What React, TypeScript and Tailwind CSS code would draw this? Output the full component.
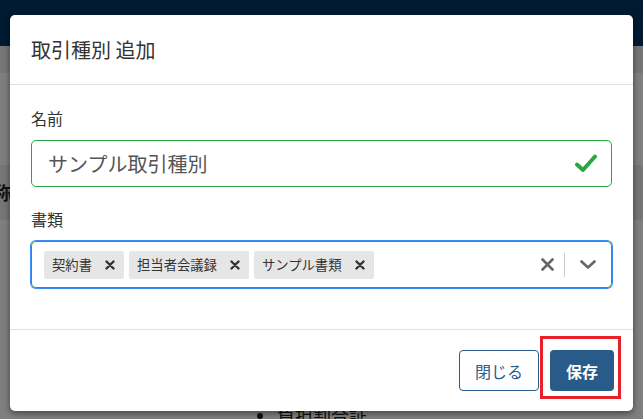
export default function App() {
  return (
    <div className="relative h-[419px] w-full overflow-hidden bg-white font-['Noto_Sans_CJK_JP','Noto_Sans',sans-serif]">
      {/* page behind the modal */}
      <div className="h-[46px] bg-[#023466]" />
      <div className="h-[27px] bg-[#ececec]" />
      <div className="h-[92px] bg-white" />
      <div className="flex h-[55px] items-center bg-[#ececec]">
        <span className="ml-[-6px] text-[18px] font-bold text-[#222]">称</span>
      </div>
      <ul className="pl-[257px] pt-[182px] text-[18px] text-[#222]">
        <li className="flex items-center gap-[14px]">
          <span className="h-[6px] w-[6px] rounded-full bg-[#222]" />
          負担割合証
        </li>
      </ul>

      {/* backdrop + modal */}
      <div className="absolute inset-0 bg-black/50 px-[10px] pt-[15px]">
        <div className="flex h-[396px] w-[623px] flex-col rounded-[5px] bg-white shadow-[0_2px_6px_rgba(0,0,0,0.5)]">
          <div className="flex h-[70px] items-center border-b border-[#e0e0e0] px-[21px]">
            <h5 className="text-[20px] text-[#333]">取引種別 追加</h5>
          </div>

          <div className="flex-1 px-[21px] pt-[21px]">
            <div className="mb-[20px]">
              <label className="mb-[10px] block text-[16px] leading-6 text-[#333]">名前</label>
              <div className="flex h-[47px] items-center justify-between rounded-[5px] border border-[#28a745] pl-[16px] pr-[14px]">
                <span className="text-[20px] text-[#555]">サンプル取引種別</span>
                <svg width="22" height="19" viewBox="0 0 22 19" fill="none">
                  <path d="M2 10.5 L8 16 L20 2.5" stroke="#28a745" strokeWidth="4" strokeLinecap="round" strokeLinejoin="round" />
                </svg>
              </div>
            </div>

            <div>
              <label className="mb-[10px] block text-[16px] leading-6 text-[#333]">書類</label>
              <div className="flex h-[47px] items-center rounded-[5px] border border-[#28a745] pl-[12px] shadow-[0_0_0_1px_#3b8cf0]">
                <div className="flex flex-1 items-center gap-[5px]">
                  {["契約書", "担当者会議録", "サンプル書類"].map((t) => (
                    <div key={t} className="flex h-[28px] items-center gap-[13px] rounded-[2px] bg-[#e6e6e6] pl-[8px] pr-[9px]">
                      <span className="text-[13.33px] text-[#333]">{t}</span>
                      <svg width="10" height="10" viewBox="0 0 10 10">
                        <path d="M1.5 1.5 L8.5 8.5 M8.5 1.5 L1.5 8.5" stroke="#333" strokeWidth="2.4" strokeLinecap="round" />
                      </svg>
                    </div>
                  ))}
                </div>
                <div className="flex items-center">
                  <div className="px-[10px]">
                    <svg width="13" height="13" viewBox="0 0 13 13">
                      <path d="M1.5 1.5 L11.5 11.5 M11.5 1.5 L1.5 11.5" stroke="#666" strokeWidth="2.6" strokeLinecap="round" />
                    </svg>
                  </div>
                  <div className="h-[24px] w-px bg-[#ccc]" />
                  <div className="pl-[15px] pr-[15px]">
                    <svg width="16" height="9" viewBox="0 0 16 9">
                      <path d="M1.5 1.5 L8 7.5 L14.5 1.5" stroke="#666" strokeWidth="2.6" fill="none" strokeLinecap="round" strokeLinejoin="round" />
                    </svg>
                  </div>
                </div>
              </div>
            </div>
          </div>

          <div className="flex h-[82px] items-center justify-end gap-[11px] border-t border-[#e0e0e0] pr-[19px]">
            <button className="h-[41px] rounded-[4px] border border-[#2a5b8c] px-[15px] text-[16px] text-[#2a5b8c]">閉じる</button>
            <div className="relative">
              <button className="h-[41px] rounded-[4px] bg-[#285a8a] px-[16px] text-[16px] font-bold text-white">保存</button>
              <div className="pointer-events-none absolute left-[-10px] right-[-7px] top-[-14px] bottom-[-8px] border-[3px] border-[#e8202a]" />
            </div>
          </div>
        </div>
      </div>
    </div>
  );
}
